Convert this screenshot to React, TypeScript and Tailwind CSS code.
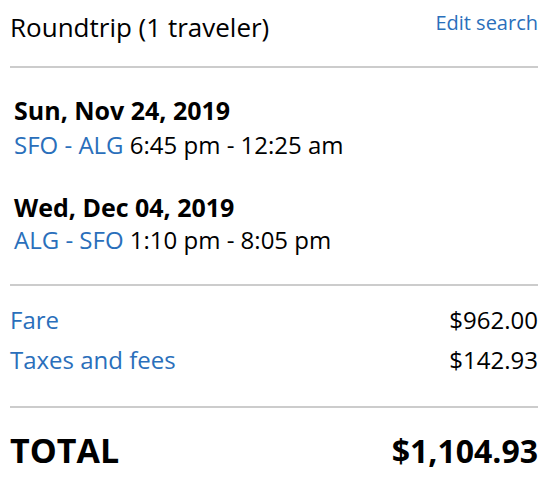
import React from "react";

export default function App() {
  const blue = "text-[#2a6fbb]";
  return (
    <div className="w-[552px] h-[482px] bg-white pl-[10px] pr-[14px] text-black [font-family:'Open_Sans',sans-serif]">
      <div className="flex justify-between items-start pt-[9px]">
        <div className="text-[26px] leading-[36px]">Roundtrip (1 traveler)</div>
        <div className={`text-[20px] leading-[28px] ${blue}`}>Edit search</div>
      </div>
      <div className="mt-[21px] h-[2px] bg-[#cccccc]" />
      <div className="pl-[4px]">
        <div className="mt-[25px] text-[25px] leading-[34px] font-bold">Sun, Nov 24, 2019</div>
        <div className="mt-[2px] text-[24px] leading-[32px]">
          <span className={blue}>SFO - ALG</span> 6:45 pm - 12:25 am
        </div>
        <div className="mt-[29px] text-[25px] leading-[34px] font-bold">Wed, Dec 04, 2019</div>
        <div className="mt-[0px] text-[24px] leading-[32px]">
          <span className={blue}>ALG - SFO</span> 1:10 pm - 8:05 pm
        </div>
      </div>
      <div className="mt-[28px] h-[2px] bg-[#cccccc]" />
      <div className="mt-[14px] text-[24px] leading-[40px]">
        <div className="flex justify-between">
          <span className={blue}>Fare</span>
          <span>$962.00</span>
        </div>
        <div className="flex justify-between">
          <span className={blue}>Taxes and fees</span>
          <span>$142.93</span>
        </div>
      </div>
      <div className="mt-[26px] h-[2px] bg-[#cccccc]" />
      <div className="mt-[22px] flex justify-between items-baseline font-bold leading-[40px]">
        <span className="text-[34px]">TOTAL</span>
        <span className="text-[32px]">$1,104.93</span>
      </div>
    </div>
  );
}
